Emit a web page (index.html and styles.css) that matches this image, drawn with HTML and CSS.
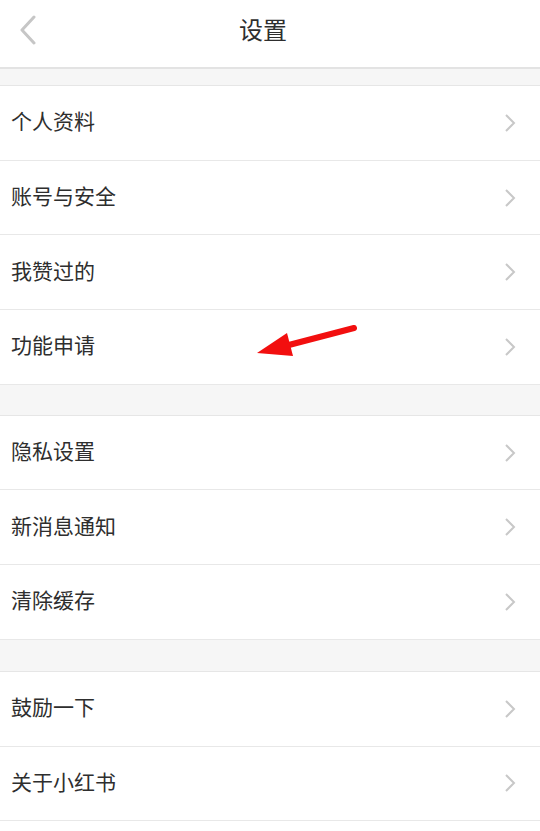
FILE: index.html
```html
<!DOCTYPE html>
<html lang="zh-CN">
<head>
<meta charset="utf-8">
<title>设置</title>
<link rel="stylesheet" href="styles.css">
</head>
<body>
<div class="page">
  <header class="topbar">
    <span class="back">
      <svg width="18" height="30" viewBox="0 0 18 30"><polyline points="15,2 3,15 15,28" fill="none" stroke="#c6c6c6" stroke-width="3" stroke-linecap="round" stroke-linejoin="round"/></svg>
    </span>
    <h1 class="title">设置</h1>
  </header>
  <div class="gap gap-top"></div>
  <ul class="group">
    <li class="row"><span class="label">个人资料</span><span class="chev"><svg width="12" height="20" viewBox="0 0 12 20"><polyline points="2,2 10,10 2,18" fill="none" stroke="#c8c8c8" stroke-width="2"/></svg></span></li>
    <li class="row"><span class="label">账号与安全</span><span class="chev"><svg width="12" height="20" viewBox="0 0 12 20"><polyline points="2,2 10,10 2,18" fill="none" stroke="#c8c8c8" stroke-width="2"/></svg></span></li>
    <li class="row"><span class="label">我赞过的</span><span class="chev"><svg width="12" height="20" viewBox="0 0 12 20"><polyline points="2,2 10,10 2,18" fill="none" stroke="#c8c8c8" stroke-width="2"/></svg></span></li>
    <li class="row"><span class="label">功能申请</span><span class="chev"><svg width="12" height="20" viewBox="0 0 12 20"><polyline points="2,2 10,10 2,18" fill="none" stroke="#c8c8c8" stroke-width="2"/></svg></span></li>
  </ul>
  <div class="gap"></div>
  <ul class="group">
    <li class="row"><span class="label">隐私设置</span><span class="chev"><svg width="12" height="20" viewBox="0 0 12 20"><polyline points="2,2 10,10 2,18" fill="none" stroke="#c8c8c8" stroke-width="2"/></svg></span></li>
    <li class="row"><span class="label">新消息通知</span><span class="chev"><svg width="12" height="20" viewBox="0 0 12 20"><polyline points="2,2 10,10 2,18" fill="none" stroke="#c8c8c8" stroke-width="2"/></svg></span></li>
    <li class="row"><span class="label">清除缓存</span><span class="chev"><svg width="12" height="20" viewBox="0 0 12 20"><polyline points="2,2 10,10 2,18" fill="none" stroke="#c8c8c8" stroke-width="2"/></svg></span></li>
  </ul>
  <div class="gap gap-b"></div>
  <ul class="group">
    <li class="row"><span class="label">鼓励一下</span><span class="chev"><svg width="12" height="20" viewBox="0 0 12 20"><polyline points="2,2 10,10 2,18" fill="none" stroke="#c8c8c8" stroke-width="2"/></svg></span></li>
    <li class="row"><span class="label">关于小红书</span><span class="chev"><svg width="12" height="20" viewBox="0 0 12 20"><polyline points="2,2 10,10 2,18" fill="none" stroke="#c8c8c8" stroke-width="2"/></svg></span></li>
  </ul>
  <svg class="annot" width="540" height="831" viewBox="0 0 540 831">
    <line x1="354" y1="328" x2="285" y2="346" stroke="#f20f0f" stroke-width="6" stroke-linecap="round"/>
    <polygon points="257,353 287,333 293,356" fill="#f20f0f"/>
  </svg>
</div>
</body>
</html>
```
FILE: styles.css
```css
* { box-sizing: border-box; }
html, body { margin: 0; padding: 0; }
body {
  background: #ffffff;
  font-family: "Noto Sans CJK SC", "Noto Sans", sans-serif;
  color: #333333;
}
.page {
  position: relative;
  width: 540px;
  min-height: 831px;
  overflow: hidden;
}
.topbar {
  height: 69px;
  padding-bottom: 9px;
  display: flex;
  align-items: center;
  border-bottom: 2px solid #e3e3e3;
  background: #ffffff;
  position: relative;
}
.back {
  position: absolute;
  left: 19px;
  top: 15px;
  display: flex;
}
.title {
  flex: 1;
  margin: 0;
  text-align: center;
  padding-right: 14px;
  font-size: 24px;
  font-weight: 400;
  color: #2e2e2e;
  line-height: 1;
}
.gap {
  height: 16px;
  background: #f6f6f6;
}
.gap-top { height: 16px; }
.group + .gap { height: 30px; }
.group + .gap-b { height: 31px; }
.group {
  list-style: none;
  margin: 0;
  padding: 0;
  border-top: 1px solid #e6e6e6;
  background: #ffffff;
}
.row {
  height: 74.7px;
  display: flex;
  align-items: center;
  justify-content: space-between;
  padding: 0 24px 0 11px;
  border-bottom: 1px solid #e8e8e8;
}
.label {
  font-size: 21px;
  line-height: 1;
  color: #2e2e2e;
  margin-bottom: 4px;
}
.chev {
  display: flex;
}
.annot {
  position: absolute;
  left: 0;
  top: 0;
  pointer-events: none;
}
```
